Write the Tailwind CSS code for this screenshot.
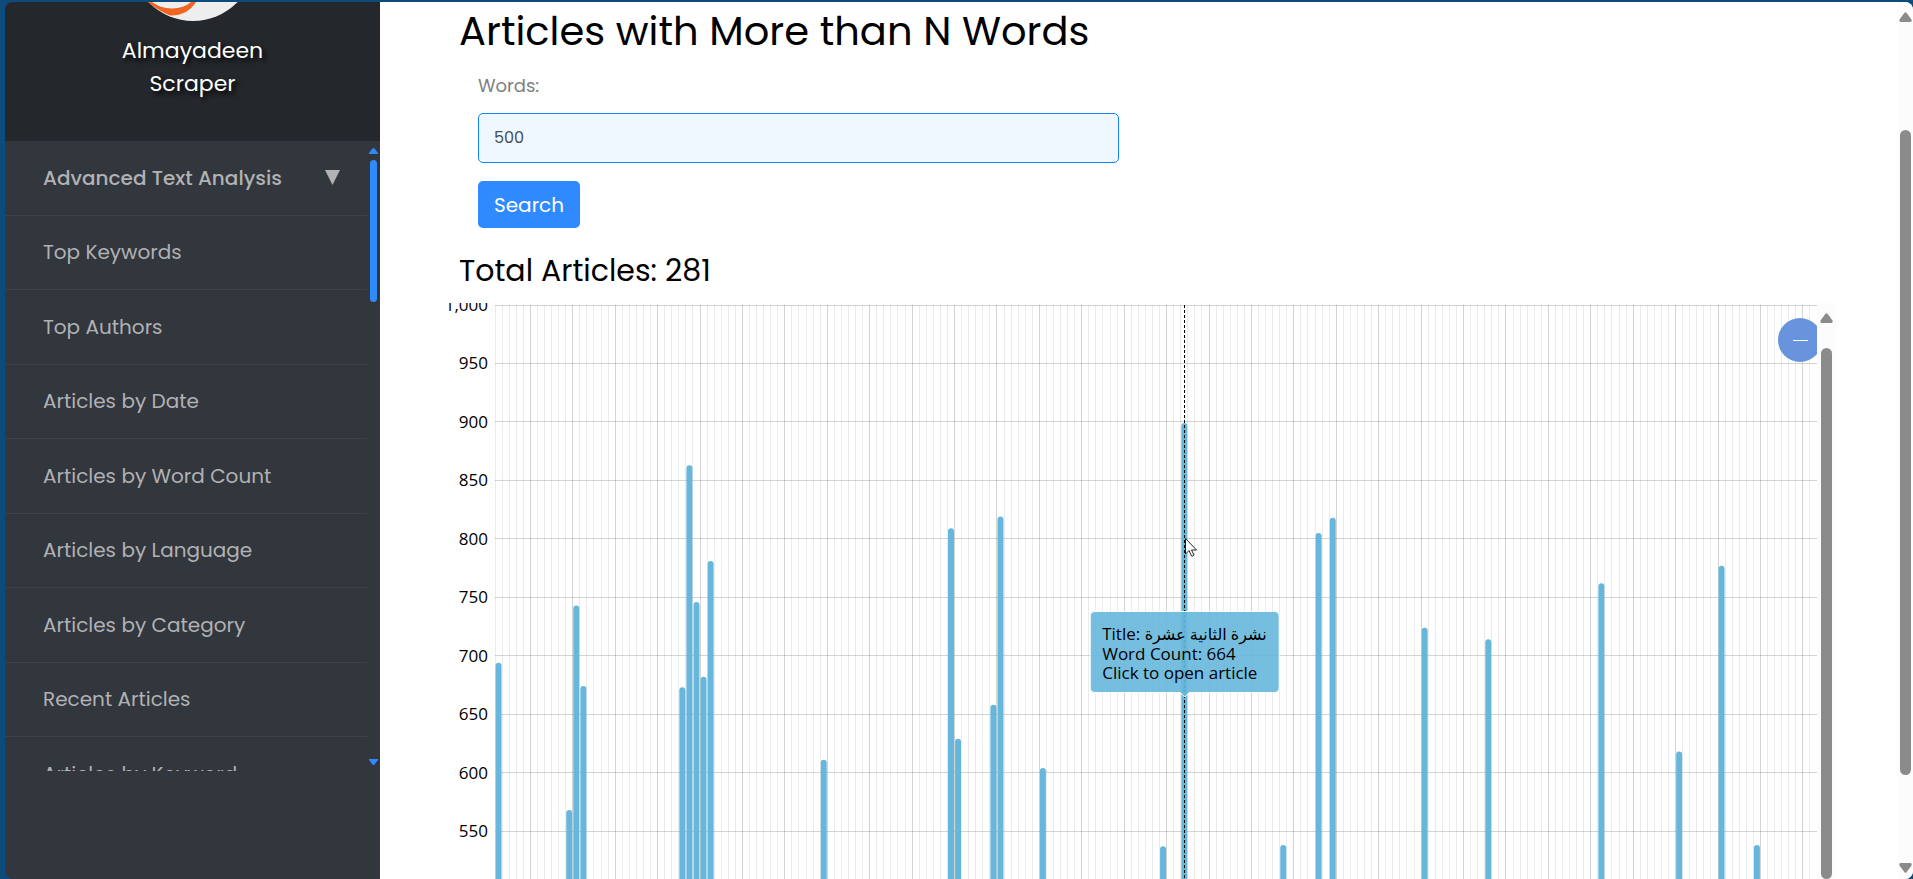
<!DOCTYPE html>
<html lang="en">
<head>
<meta charset="utf-8">
<title>Almayadeen Scraper</title>
<script src="https://cdn.jsdelivr.net/npm/@tailwindcss/browser@4"></script>
</head>
<body class="h-screen overflow-hidden bg-[#0d4b7d] font-[Poppins,Inter,sans-serif]">
<div class="flex h-full pt-[2px] pl-[5px]">

  <aside class="flex w-[375px] shrink-0 flex-col overflow-hidden rounded-l-lg bg-[#32363d]">
    <header class="flex h-[139px] shrink-0 flex-col items-center bg-[#24272b]">
      <svg class="h-[19px] w-[124px]" viewBox="0 0 124 19" aria-hidden="true">
        <circle cx="62" cy="-43" r="62" fill="#eeeeee"/>
        <path d="M17 0Q26 8 39 13.500Q56 14 65 0H60Q53 6 41 6.500Q29 6 21 0Z" fill="#f16522"/>
      </svg>
      <h2 class="mt-[13px] w-[180px] text-center text-[22px] leading-[33px] text-white [text-shadow:3px_3px_5px_#000]">Almayadeen Scraper</h2>
    </header>
    <div class="flex h-[630px] shrink-0">
      <nav class="min-w-0 flex-1 overflow-hidden text-[20px] text-[#b0b2b4]">
        <div class="grid h-[596px] grid-rows-8">
          <button class="flex items-center justify-between border-b border-[#3d4249] pr-[27px] pl-[38px] font-medium">Advanced Text Analysis
            <svg class="h-[15px] w-[15px]" viewBox="0 0 15 15" fill="#b0b2b4" aria-hidden="true"><path d="M0 0H15L7.500 15Z"/></svg>
          </button>
          <a href="#" class="flex items-center border-b border-[#3d4249] pl-[38px]">Top Keywords</a>
          <a href="#" class="flex items-center border-b border-[#3d4249] pl-[38px]">Top Authors</a>
          <a href="#" class="flex items-center border-b border-[#3d4249] pl-[38px]">Articles by Date</a>
          <a href="#" class="flex items-center border-b border-[#3d4249] pl-[38px]">Articles by Word Count</a>
          <a href="#" class="flex items-center border-b border-[#3d4249] pl-[38px]">Articles by Language</a>
          <a href="#" class="flex items-center border-b border-[#3d4249] pl-[38px]">Articles by Category</a>
          <a href="#" class="flex items-center border-b border-[#3d4249] pl-[38px]">Recent Articles</a>
        </div>
        <a href="#" class="flex h-[74px] items-center pl-[38px]">Articles by Keyword</a>
      </nav>
      <div class="flex w-[13px] flex-col items-center pt-[7px] pb-[6px]" aria-hidden="true">
        <svg class="h-[6px] w-[9px] shrink-0" viewBox="0 0 9 6" fill="#2f89ff"><path d="M3.500 .5Q4.500-.5 5.500 .5L9 5V6H0V5Z"/></svg>
        <div class="mt-[6px] mb-auto h-[142px] w-[7px] rounded-full bg-[#2f89ff]"></div>
        <svg class="h-[6px] w-[9px] shrink-0" viewBox="0 0 9 6" fill="#2f89ff"><path d="M3.500 5.500Q4.500 6.500 5.500 5.500L9 1V0H0V1Z"/></svg>
      </div>
    </div>
  </aside>

  <div class="flex min-w-0 flex-1 overflow-hidden rounded-r-lg bg-white">
    <main class="flex min-w-0 flex-1 flex-col pt-[5px] pr-[61px] pl-16">
      <h1 class="pl-[15px] text-[40px] leading-[48px] text-black">Articles with More than N Words</h1>
      <form class="flex flex-col items-start pl-[34px]" onsubmit="return false">
        <label for="words" class="mt-[19px] text-[18px] leading-[24px] text-[#808080]">Words:</label>
        <input id="words" type="text" value="500" class="mt-[15px] h-[50px] w-full max-w-[641px] rounded-[5px] border border-[#1284f5] bg-[#eff7ff] px-[15px] pb-[2px] text-[16px] text-[#495057] outline-none">
        <button type="submit" class="mt-[18px] h-[47px] w-[102px] rounded-[5px] bg-[#2f89ff] text-[20px] text-white">Search</button>
      </form>
      <h2 class="mt-[25px] pl-[15px] text-[30px] leading-[36px] text-black">Total Articles: 281</h2>

      <section class="mt-[14px] flex min-h-0 flex-1" aria-label="Articles by word count">
        <div id="plot" class="relative min-w-0 flex-1 overflow-hidden">
          <svg id="chart" class="absolute inset-0 h-full w-full font-['Open_Sans',sans-serif] text-[17px]"></svg>
          <div id="tip" class="absolute top-[308px] -translate-x-1/2 rounded-[5px] border border-white bg-[#67b7dc]/90 px-[12px] pt-[12px] pb-[10px] font-['Open_Sans','DejaVu_Sans',sans-serif] text-[17px] leading-[19px] whitespace-nowrap text-black">
            <p>Title: <span lang="ar" class="text-[16px]">نشرة الثانية عشرة</span></p>
            <p>Word Count: 664</p>
            <p>Click to open article</p>
            <svg class="absolute top-full left-1/2 h-[6px] w-[10px] -translate-x-1/2" viewBox="0 0 10 6" aria-hidden="true"><path d="M0 0L5 5L10 0" fill="#67b7dc" stroke="#fff"/></svg>
          </div>
          <svg id="pointer" class="absolute top-[235px] h-[19px] w-[12px]" viewBox="0 0 12 19" aria-hidden="true"><path d="M.5 .5V16L4 12.500L6.500 18Q8 18.500 9 17L6.500 12H11.500Z" fill="#fff" stroke="#222"/></svg>
          <button class="absolute top-[15px] -right-[5px] flex h-[44px] w-[44px] items-center justify-center rounded-full bg-[#6794dc]" aria-label="Zoom out"><span class="h-px w-[15px] bg-white"></span></button>
        </div>
        <div class="flex w-[19px] flex-col items-center bg-[#fcfcfc] pt-[10px]" aria-hidden="true">
          <svg class="h-[10px] w-[13px] shrink-0" viewBox="0 0 13 10" fill="#8b8b8b"><path d="M5.500 .8Q6.500-.5 7.500 .8L12.500 7.500Q13 10 11.500 10H1.500Q0 10 .5 7.500Z"/></svg>
          <div class="mt-[25px] w-[11px] flex-1 rounded-full bg-[#8b8b8b]"></div>
        </div>
      </section>
    </main>
    <div class="flex w-[16px] flex-col items-end bg-[#fcfcfc] pt-[10px] pr-px pb-[6px]" aria-hidden="true">
      <svg class="h-[10px] w-[13px] shrink-0" viewBox="0 0 13 10" fill="#8b8b8b"><path d="M5.500 .8Q6.500-.5 7.500 .8L12.500 7.500Q13 10 11.500 10H1.500Q0 10 .5 7.500Z"/></svg>
      <div class="mt-[108px] mr-px mb-auto h-[645px] w-[11px] rounded-full bg-[#8b8b8b]"></div>
      <svg class="h-[10px] w-[13px] shrink-0" viewBox="0 0 13 10" fill="#8b8b8b"><path d="M5.500 9.200Q6.500 10.500 7.500 9.200L12.500 2.500Q13 0 11.500 0H1.500Q0 0 .5 2.500Z"/></svg>
    </div>
  </div>
</div>

<script>
// [article index, word count]
const articles = [[0,694],[10,568],[11,743],[12,674],[26,673],[27,863],[28,746],[29,682],[30,781],[46,611],
  [64,809],[65,629],[70,658],[71,819],[77,604],[94,537],[97,899],[111,538],[116,805],[118,818],
  [131,724],[140,714],[156,762],[167,618],[173,777],[178,538]];
const hovered = 97, columns = 187, left = 51, top0 = 2, perWord = 1.169;
const plot = document.getElementById('plot'), chart = document.getElementById('chart');

function draw() {
  const w = plot.clientWidth, h = plot.clientHeight, step = (w - left) / columns;
  const crisp = n => Math.floor(n) + 0.5;
  const y = v => top0 + (1000 - v) * perWord;
  let s = '';
  for (let k = 0; k <= columns; k++) {
    const x = crisp(left + k * step);
    s += `<path d="M${x} ${top0}V${h}" stroke="#000" stroke-opacity="${k % 6 === 5 ? .17 : .08}"/>`;
  }
  for (let v = 1000; v >= 550; v -= 50) {
    s += `<path d="M${left} ${crisp(y(v))}H${w}" stroke="#000" stroke-opacity=".17"/>`;
    s += `<text x="${left - 7}" y="${Math.round(y(v)) + 6}" text-anchor="end">${v.toLocaleString('en-US')}</text>`;
  }
  for (const [i, v] of articles) {
    s += `<rect x="${left + (i + .5) * step - 3}" y="${y(v)}" width="6" height="${h}" rx="3" fill="#67b7dc"/>`;
  }
  const cx = crisp(left + (hovered + .5) * step);
  s += `<path d="M${cx} ${top0}V${h}" stroke="#000" stroke-dasharray="3 2"/>`;
  chart.innerHTML = s;
  document.getElementById('tip').style.left = cx + 'px';
  document.getElementById('pointer').style.left = cx + 'px';
}
new ResizeObserver(draw).observe(plot);
</script>
</body>
</html>
